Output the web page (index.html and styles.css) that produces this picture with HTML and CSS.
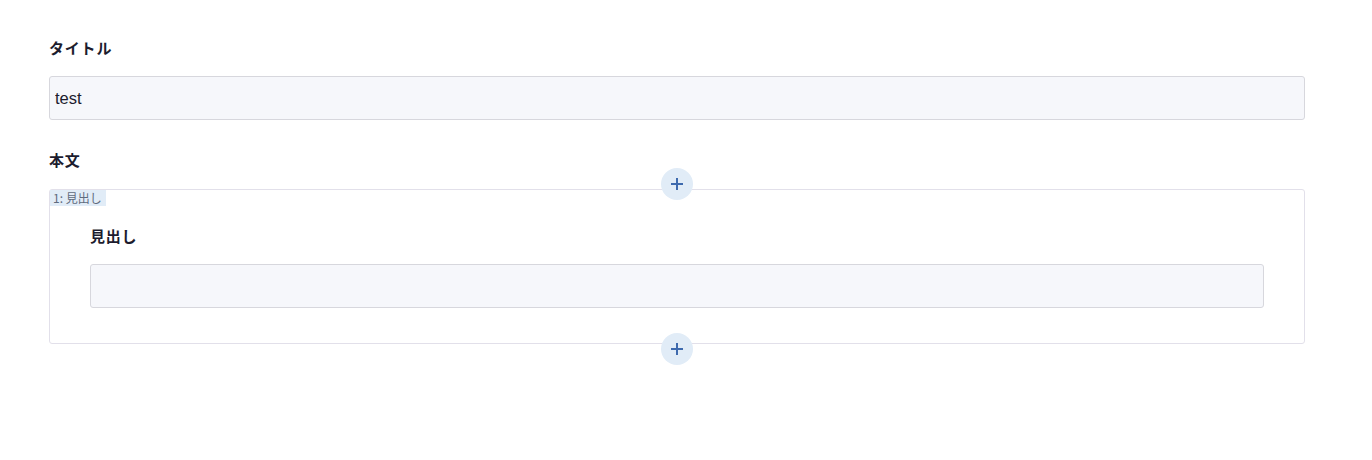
FILE: index.html
```html
<!DOCTYPE html>
<html lang="ja">
<head>
    <meta charset="UTF-8">
    <meta name="viewport" content="width=device-width, initial-scale=1.0">
    <title>Editor</title>
    <link rel="stylesheet" href="styles.css">
</head>
<body>

    <div class="form">
        <div class="field">
            <label class="field-label" for="title">タイトル</label>
            <input type="text" id="title" class="text-input" value="test">
        </div>

        <div class="field">
            <div class="field-label">本文</div>
            <div class="block">
                <button class="add-btn add-top" type="button" aria-label="add">
                    <svg width="12" height="12" viewBox="0 0 12 12"><path d="M6 0v12M0 6h12" stroke="currentColor" stroke-width="2" fill="none"/></svg>
                </button>
                <span class="block-tag">1: 見出し</span>
                <label class="field-label" for="heading">見出し</label>
                <input type="text" id="heading" class="text-input">
                <button class="add-btn add-bottom" type="button" aria-label="add">
                    <svg width="12" height="12" viewBox="0 0 12 12"><path d="M6 0v12M0 6h12" stroke="currentColor" stroke-width="2" fill="none"/></svg>
                </button>
            </div>
        </div>
    </div>

</body>
</html>
```

FILE: styles.css
```css
body {
    margin: 0;
    padding: 0;
    background-color: #fff;
    color: #1c1c2e;
    font-family: "Liberation Sans", "Noto Sans CJK JP", sans-serif;
}

.form {
    width: 1256px;
    margin-left: 49px;
    padding-top: 38px;
}

.field {
    margin-bottom: 30px;
}

.field-label {
    display: block;
    font-family: "Noto Sans CJK JP", sans-serif;
    font-weight: bold;
    font-size: 15px;
    letter-spacing: 0.8px;
    line-height: 20px;
    margin-bottom: 18px;
}

.text-input {
    display: block;
    box-sizing: border-box;
    width: 100%;
    height: 44px;
    padding: 0 5px;
    border: 1px solid #d7d7dd;
    border-radius: 3px;
    background-color: #f6f7fb;
    font-family: "Liberation Sans", "Noto Sans CJK JP", sans-serif;
    font-size: 16.5px;
    color: #1c1c2e;
    outline: none;
}

.block {
    position: relative;
    margin-top: 19px;
    border: 1px solid #e2e0ea;
    border-radius: 3px;
    padding: 36px 40px 35px;
}

.block-tag {
    position: absolute;
    top: 0;
    left: 0;
    padding: 0 4px 0 3px;
    line-height: 16px;
    font-size: 12px;
    color: #5f6b7d;
    background-color: #e1ecf7;
    font-family: "Noto Sans CJK JP", sans-serif;
}

.add-btn {
    position: absolute;
    left: 50%;
    width: 32px;
    height: 32px;
    margin-left: -16px;
    padding: 0;
    border: none;
    border-radius: 50%;
    background-color: #e1ecf7;
    color: #3e6aae;
    display: flex;
    align-items: center;
    justify-content: center;
    cursor: pointer;
}

.add-top {
    top: -22px;
}

.add-bottom {
    bottom: -22px;
}
```
